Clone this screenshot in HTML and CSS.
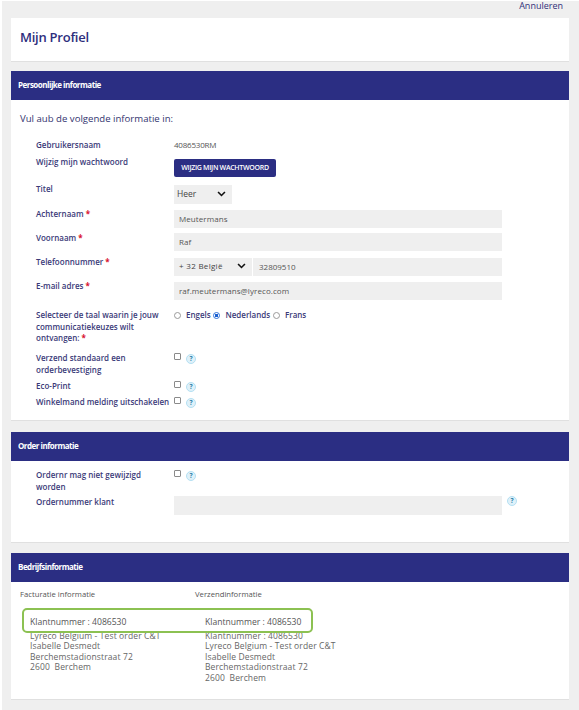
FILE: index.html
```
<!DOCTYPE html>
<html lang="nl">
<head>
<meta charset="utf-8">
<title>Mijn Profiel</title>
<link rel="stylesheet" href="styles.css">
</head>
<body>
<svg class="defs" width="0" height="0" aria-hidden="true">
  <symbol id="chev" viewBox="0 0 10 7">
    <path d="M1 1.2 5 5.2 9 1.2" fill="none" stroke="#111" stroke-width="1.9"/>
  </symbol>
</svg>
<div class="page">
  <div class="topbar"><a class="cancel">Annuleren</a></div>

  <section class="card title-card"><h1>Mijn Profiel</h1></section>

  <section class="card personal">
    <h2 class="band">Persoonlijke informatie</h2>
    <p class="intro">Vul aub de volgende informatie in:</p>
    <div class="row h17"><div class="label">Gebruikersnaam</div><div class="value static">4086530RM</div></div>
    <div class="row h27"><div class="label">Wijzig mijn wachtwoord</div><div class="value v3"><span class="btn">WIJZIG MIJN WACHTWOORD</span></div></div>
    <div class="row h25"><div class="label">Titel</div><div class="value"><span class="select title-select">Heer<svg class="chev"><use href="#chev"/></svg></span></div></div>
    <div class="row h24"><div class="label">Achternaam <b>*</b></div><div class="value"><span class="input">Meutermans</span></div></div>
    <div class="row h24"><div class="label">Voornaam <b>*</b></div><div class="value v1"><span class="input">Raf</span></div></div>
    <div class="row h24"><div class="label">Telefoonnummer <b>*</b></div><div class="value"><span class="phone"><span class="select phone-select">+ 32 België<svg class="chev"><use href="#chev"/></svg></span><span class="phone-num">32809510</span></span></div></div>
    <div class="row h29"><div class="label">E-mail adres <b>*</b></div><div class="value"><span class="input">raf.meutermans@lyreco.com</span></div></div>
    <div class="row h43"><div class="label">Selecteer de taal waarin je jouw communicatiekeuzes wilt ontvangen: <b>*</b></div>
      <div class="value radios">
        <i class="radio"></i><span class="opt">Engels</span><i class="radio on"></i><span class="opt">Nederlands</span><i class="radio"></i><span class="opt">Frans</span>
      </div></div>
    <div class="row h28"><div class="label narrow">Verzend standaard een orderbevestiging</div><div class="value checks"><i class="check"></i><span class="help">?</span></div></div>
    <div class="row h16"><div class="label">Eco-Print</div><div class="value checks"><i class="check"></i><span class="help">?</span></div></div>
    <div class="row"><div class="label">Winkelmand melding uitschakelen</div><div class="value checks"><i class="check"></i><span class="help">?</span></div></div>
  </section>

  <section class="card order">
    <h2 class="band">Order informatie</h2>
    <div class="row h27 first"><div class="label narrow">Ordernr mag niet gewijzigd worden</div><div class="value checks"><i class="check"></i><span class="help">?</span></div></div>
    <div class="row"><div class="label">Ordernummer klant</div><div class="value order-value"><span class="input"></span><span class="help">?</span></div></div>
  </section>

  <section class="card company">
    <h2 class="band">Bedrijfsinformatie</h2>
    <div class="addr-grid">
      <div class="addr">
        <h3>Facturatie informatie</h3>
        <p class="num">Klantnummer : 4086530</p>
        <p class="lines">Lyreco Belgium - Test order C&amp;T<br>Isabelle Desmedt<br>Berchemstadionstraat 72<br>2600&nbsp; Berchem</p>
      </div>
      <div class="addr">
        <h3>Verzendinformatie</h3>
        <p class="num">Klantnummer : 4086530</p>
        <p class="lines">Klantnummer : 4086530<br>Lyreco Belgium - Test order C&amp;T<br>Isabelle Desmedt<br>Berchemstadionstraat 72<br>2600&nbsp; Berchem</p>
      </div>
    </div>
    <div class="highlight"></div>
  </section>
</div>
</body>
</html>
```

FILE: styles.css
```
* { box-sizing: border-box; }
html, body { margin: 0; height: 100%; }
body {
  background: #fff;
  font-family: "Open Sans", "Noto Sans", sans-serif;
  color: #33346f;
  overflow: hidden;
}
.defs { position: absolute; }
.page {
  margin: 1px 0 0 2px;
  width: 577px;
  height: 709px;
  background: #efefef;
  padding: 0 10px 0 9px;
}
.topbar { height: 17px; display: flex; justify-content: flex-end; padding-right: 6px; }
.cancel { font-size: 9px; line-height: 10px; color: #2f3079; }
.card {
  background: #fff;
  border-bottom: 1px solid #e0e0e0;
  position: relative;
}
.title-card { height: 44px; padding: 10px 9px 0; margin-bottom: 9px; }
h1 { margin: 0; font-size: 13px; line-height: 18px; font-weight: 600; color: #2d2e7d; letter-spacing: -.25px; }
.band {
  margin: 0;
  height: 29px;
  padding-left: 7px;
  background: #2b2e83;
  color: #fff;
  font-size: 8px;
  font-weight: 700;
  line-height: 28px;
  letter-spacing: -.5px;
}
.personal { height: 350px; margin-bottom: 11px; }
.order { height: 111px; margin-bottom: 10px; }
.company { height: 147px; }
.intro { margin: 0 0 15px 9px; padding-top: 13px; font-size: 9.6px; line-height: 11px; color: #33346f; }
.row { display: flex; align-items: flex-start; padding-left: 25px; }
.first { margin-top: 8px; }
.h16 { height: 16px; }
.h17 { height: 17px; }
.h24 { height: 24px; }
.h25 { height: 25px; }
.h27 { height: 27px; }
.h28 { height: 28px; }
.h29 { height: 29px; }
.h43 { height: 43px; }
.label {
  flex: 0 0 138px;
  font-size: 8px;
  line-height: 11.5px;
  font-weight: 600;
  color: #3a3a78;
}
.narrow { padding-right: 20px; }
.label b { color: #d8122f; font-weight: 700; }
.value { flex: 1; padding-top: 2px; font-size: 8px; color: #555; }
.v1 { padding-top: 1px; }
.v3 { padding-top: 3px; }
.static { padding-top: 0; line-height: 11px; letter-spacing: -.2px; }
.btn {
  display: inline-block;
  width: 102px;
  height: 18px;
  background: #2b2e83;
  color: #fff;
  border-radius: 2px;
  text-align: center;
  font-size: 7px;
  font-weight: 600;
  line-height: 17px;
  letter-spacing: -.3px;
}
.input, .select, .phone {
  display: flex;
  align-items: center;
  height: 18px;
  background: #efefef;
  font-size: 8px;
  color: #555;
}
.input { width: 328px; padding: 0 0 2px 5px; letter-spacing: .08px; }
.select { justify-content: space-between; color: #444; }
.title-select { width: 58px; height: 19px; padding: 0 3px 2px; font-size: 8.5px; }
.phone { width: 328px; }
.phone-select { width: 79px; padding: 0 5px 3px; flex: none; border-right: 1px solid #fff; letter-spacing: .3px; }
.phone-num { padding: 0 0 2px 6px; }
.chev { width: 9px; height: 6px; margin-right: 1px; }
.title-select .chev { margin-right: 3px; }
.radios { display: flex; align-items: center; padding-top: 0; height: 12px; }
.radio {
  width: 7px;
  height: 7px;
  border: 1px solid #9a9a9a;
  border-radius: 50%;
  flex: none;
  background: #fff;
}
.radio.on { border-color: #2f72d8; background: radial-gradient(circle, #1a5fd0 45%, #fff 50%); }
.opt { font-size: 8px; font-weight: 600; color: #3a3a78; margin: 0 2px 0 5px; line-height: 12px; letter-spacing: -.03px; }
.radio.on + .opt { margin: 0 3px 0 6px; }
.checks { display: flex; align-items: flex-start; padding-top: 0; }
.check {
  width: 7px;
  height: 7px;
  border: 1px solid #8a8a8a;
  border-radius: 1px;
  background: #fff;
  margin-top: 1px;
}
.help {
  width: 10px;
  height: 10px;
  margin: 2px 0 0 5px;
  flex: none;
  border: 1px solid #b5e0f2;
  border-radius: 50%;
  background: #dff1fa;
  color: #2b7fa8;
  font-size: 6.5px;
  font-weight: 700;
  line-height: 8px;
  text-align: center;
}
.order-value { display: flex; align-items: flex-start; padding-top: 0; }
.order-value .input { height: 19px; }
.order-value .help { margin: 0 0 0 5px; }
.addr-grid { display: grid; grid-template-columns: 175px 1fr; padding: 6px 0 0 9px; }
.addr h3 { margin: 0 0 16px; font-size: 7.7px; line-height: 12px; font-weight: 400; color: #555; }
.num { margin: 0 0 3px 10px; font-size: 8.6px; line-height: 12px; font-weight: 500; color: #555; }
.lines { margin: 0 0 0 10px; font-size: 8.5px; line-height: 10.4px; color: #666; letter-spacing: .12px; }
.highlight {
  position: absolute;
  left: 11px;
  top: 55px;
  width: 291px;
  height: 25px;
  border: 2px solid #8cc152;
  border-radius: 5px;
  pointer-events: none;
}
```
